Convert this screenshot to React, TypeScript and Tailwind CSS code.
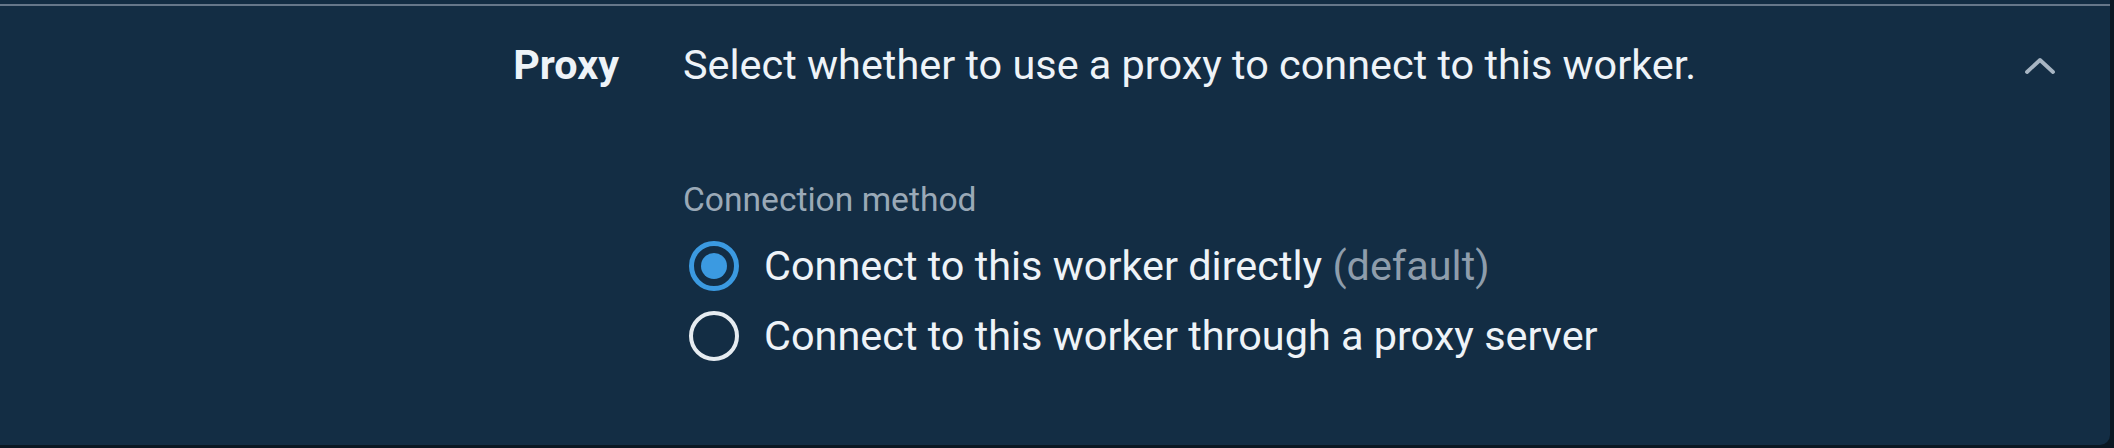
import React from "react";

function Chevron() {
  return (
    <svg width="32" height="20" viewBox="0 0 32 20" className="block">
      <polyline points="3,17 16,5 29,17" fill="none" stroke="#a7b5c3" strokeWidth="3.8" strokeLinecap="round" strokeLinejoin="round" />
    </svg>
  );
}

function Radio({ checked }: { checked: boolean }) {
  if (checked) {
    return (
      <div className="w-[50px] h-[50px] rounded-full border-[5px] border-[#3b9ae1] flex items-center justify-center shrink-0">
        <div className="w-[26px] h-[26px] rounded-full bg-[#3b9ae1]" />
      </div>
    );
  }
  return <div className="w-[50px] h-[50px] rounded-full border-[4px] border-[#e6ecf1] shrink-0" />;
}

export default function App() {
  return (
    <div className="w-[2114px] h-[448px] bg-[#0a1722]">
      <div className="w-[2110px] h-[445px] bg-[#132d44] rounded-br-[10px] pt-[4px] font-['Roboto',sans-serif] text-[#eef3f8]">
        <div className="h-[2px] bg-[#66778a]" />
        <div className="flex pt-[35px]">
          <div className="w-[619px] text-right font-bold text-[41.3px] leading-[48px]">Proxy</div>
          <div className="ml-[64px] flex-1 pr-[54px]">
            <div className="flex items-center justify-between h-[48px]">
              <div className="text-[41.4px] leading-[48px] whitespace-nowrap">Select whether to use a proxy to connect to this worker.</div>
              <Chevron />
            </div>
            <div className="mt-[91px] text-[33.6px] leading-[40px] text-[#9aa9b7]">Connection method</div>
            <div className="mt-[22px] flex flex-col gap-[22px]">
              <div className="flex items-center h-[48px]">
                <div className="ml-[6px]"><Radio checked /></div>
                <div className="ml-[25px] text-[41.4px] leading-[48px] whitespace-nowrap">
                  Connect to this worker directly <span className="text-[#8e9dac]">(default)</span>
                </div>
              </div>
              <div className="flex items-center h-[48px]">
                <div className="ml-[6px]"><Radio checked={false} /></div>
                <div className="ml-[25px] text-[41.4px] leading-[48px] whitespace-nowrap">Connect to this worker through a proxy server</div>
              </div>
            </div>
          </div>
        </div>
      </div>
    </div>
  );
}
